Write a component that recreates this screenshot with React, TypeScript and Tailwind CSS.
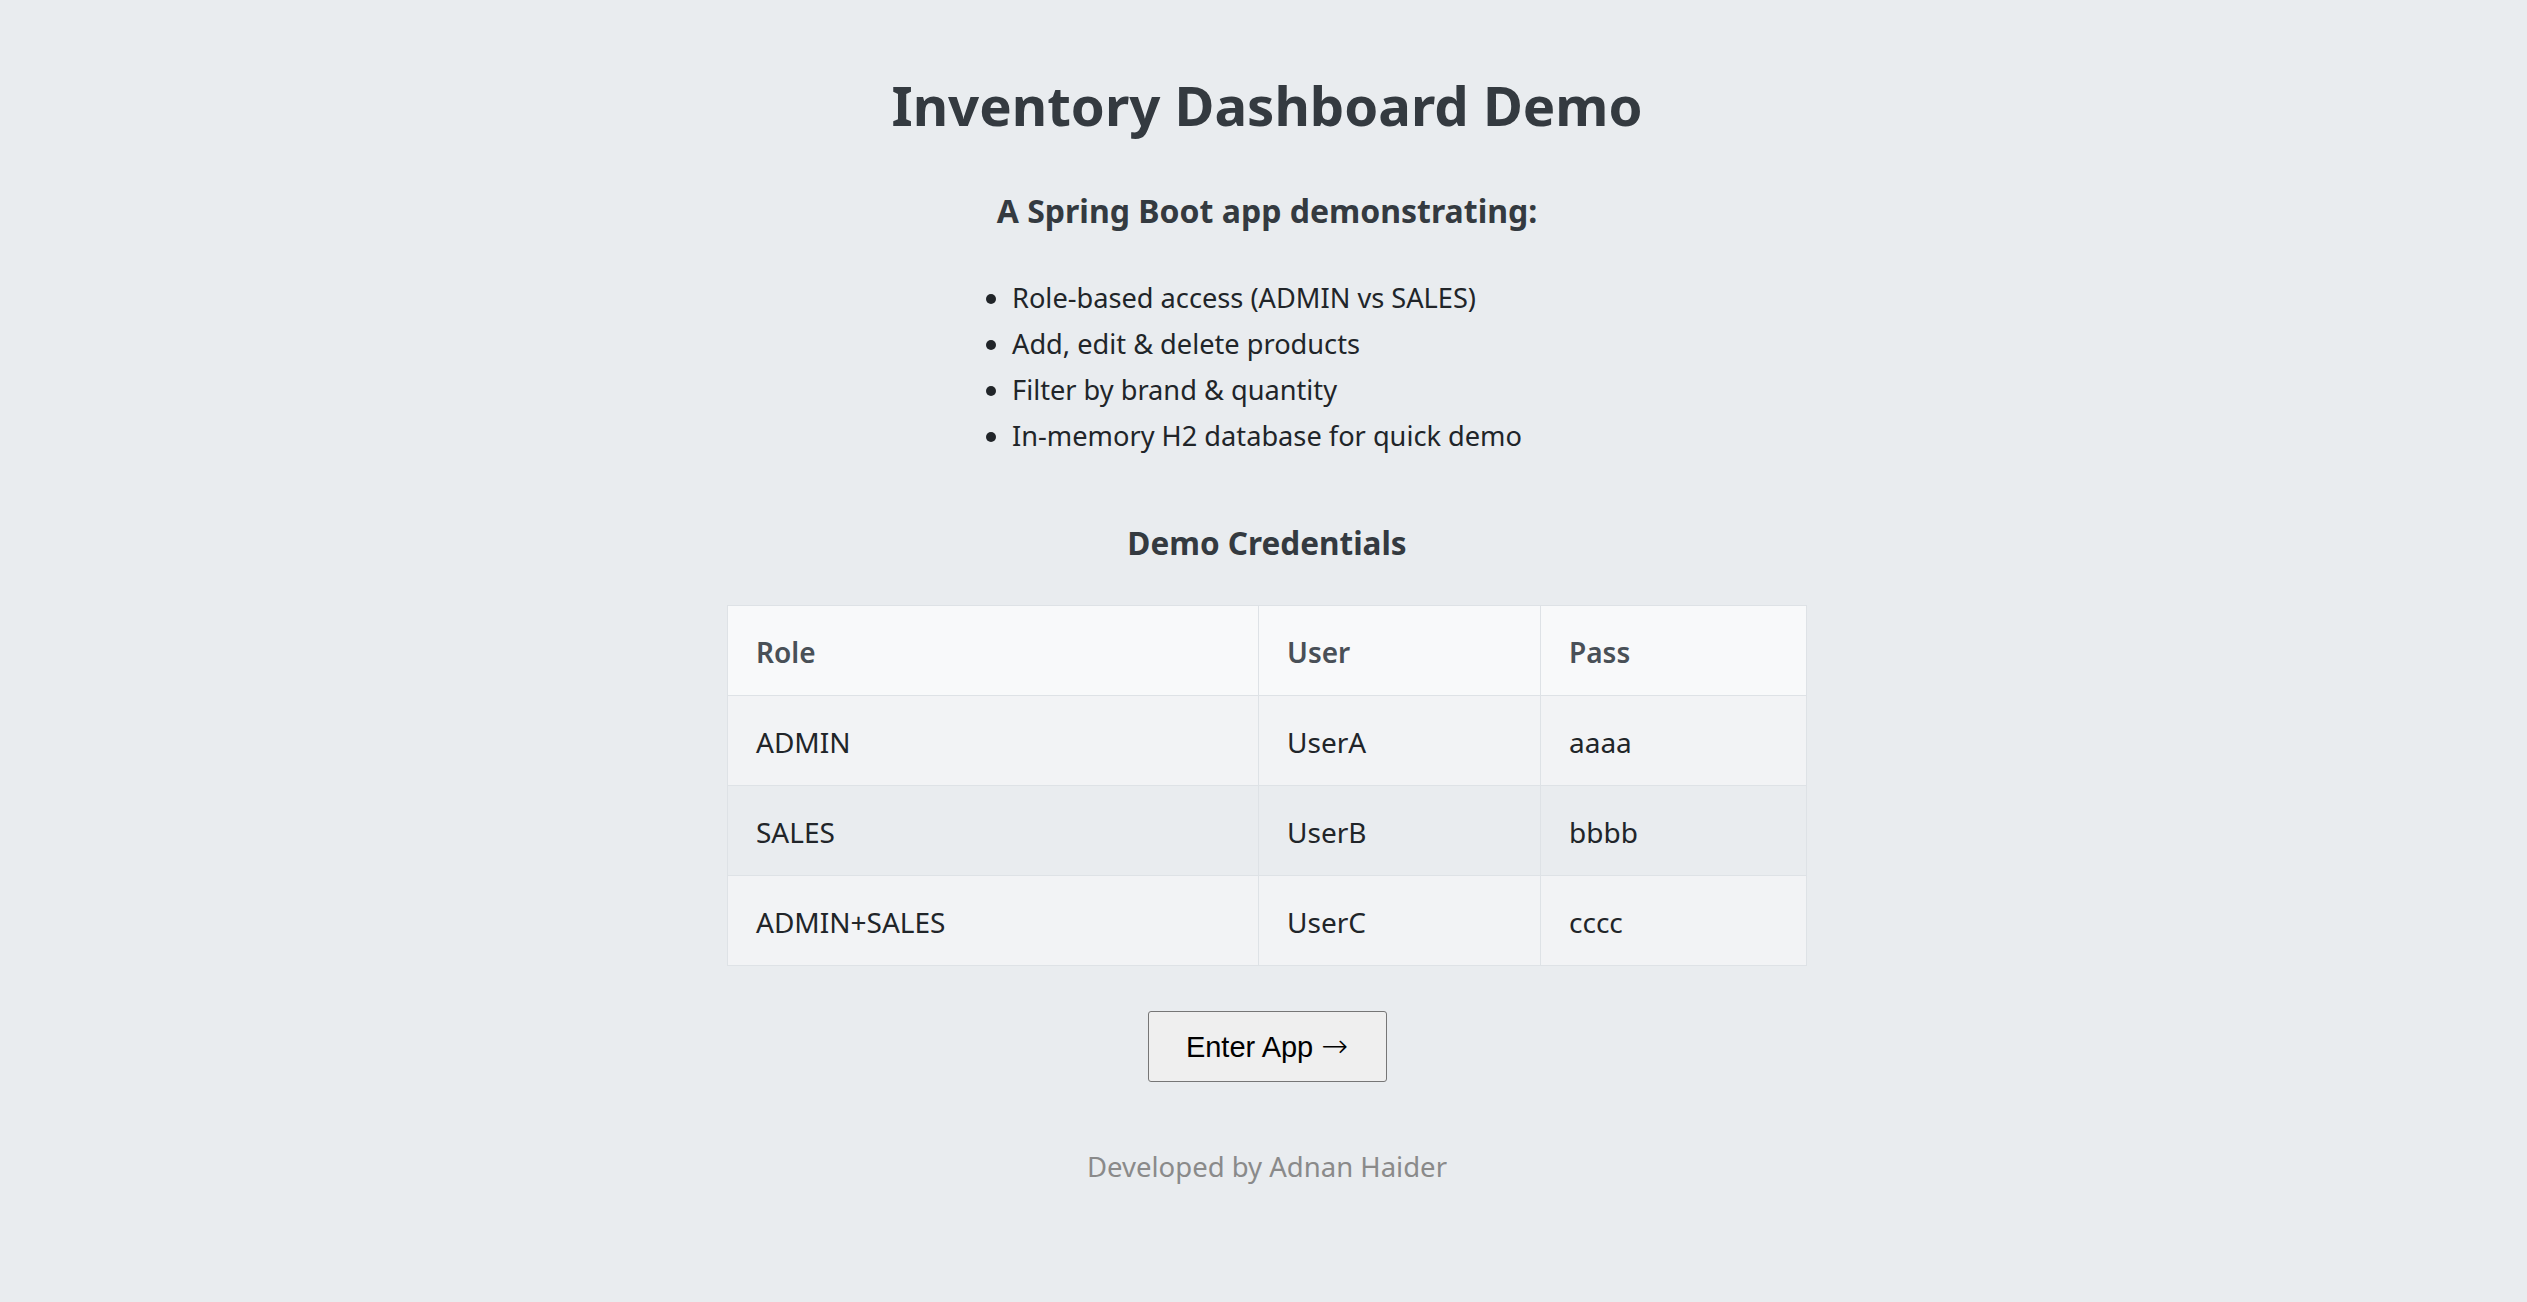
import React from 'react';

const credentials = [
  { role: 'ADMIN', user: 'UserA', pass: 'aaaa', bg: 'bg-[#f2f3f5]' },
  { role: 'SALES', user: 'UserB', pass: 'bbbb', bg: 'bg-[#e9ecef]' },
  { role: 'ADMIN+SALES', user: 'UserC', pass: 'cccc', bg: 'bg-[#f2f3f5]' },
];

const features = [
  'Role-based access (ADMIN vs SALES)',
  'Add, edit & delete products',
  'Filter by brand & quantity',
  'In-memory H2 database for quick demo',
];

export default function App() {
  return (
    <div
      className="min-h-screen bg-[#e9ecef] flex flex-col items-center pt-[72px] pb-20 pl-[7px]"
      style={{ fontFamily: '"Noto Sans", "Open Sans", sans-serif' }}
    >
      <h1 className="text-[54.5px] leading-[67px] font-bold text-[#343a40]">
        Inventory Dashboard Demo
      </h1>

      <h2 className="mt-[52px] text-[32px] leading-[40px] font-bold text-[#343a40]">
        A Spring Boot app demonstrating:
      </h2>

      <ul className="mt-[44px] list-disc text-[27.2px] leading-[46px] text-[#212529]">
        {features.map((f) => (
          <li key={f}>{f}</li>
        ))}
      </ul>

      <h3 className="mt-[64px] text-[31.5px] leading-[40px] font-bold text-[#343a40]">
        Demo Credentials
      </h3>

      <table className="mt-[42px] border-collapse text-[28px] leading-[45px] text-[#212529]">
        <thead>
          <tr className="bg-[#f8f9fa]">
            <th className="w-[531px] border border-[#dee2e6] px-[28px] pt-[24px] pb-[20px] text-left font-semibold text-[#495057]">
              Role
            </th>
            <th className="w-[282px] border border-[#dee2e6] px-[28px] pt-[24px] pb-[20px] text-left font-semibold text-[#495057]">
              User
            </th>
            <th className="w-[266px] border border-[#dee2e6] px-[28px] pt-[24px] pb-[20px] text-left font-semibold text-[#495057]">
              Pass
            </th>
          </tr>
        </thead>
        <tbody>
          {credentials.map((c) => (
            <tr key={c.user} className={c.bg}>
              <td className="border border-[#dee2e6] px-[28px] pt-[24px] pb-[20px]">{c.role}</td>
              <td className="border border-[#dee2e6] px-[28px] pt-[24px] pb-[20px]">{c.user}</td>
              <td className="border border-[#dee2e6] px-[28px] pt-[24px] pb-[20px]">{c.pass}</td>
            </tr>
          ))}
        </tbody>
      </table>

      <button
        type="button"
        className="mt-[45px] h-[71px] w-[239px] rounded-[3px] border border-[#767676] bg-[#efefef] text-[29px] leading-[34px] text-black"
        style={{ fontFamily: '"Liberation Sans", Arial, sans-serif' }}
      >
        Enter App <span className="font-['DejaVu_Sans'] text-[32px] font-light">→</span>
      </button>

      <p className="mt-[62px] text-[27.5px] leading-[45px] text-[#8a8a8a]">
        Developed by Adnan Haider
      </p>
    </div>
  );
}
